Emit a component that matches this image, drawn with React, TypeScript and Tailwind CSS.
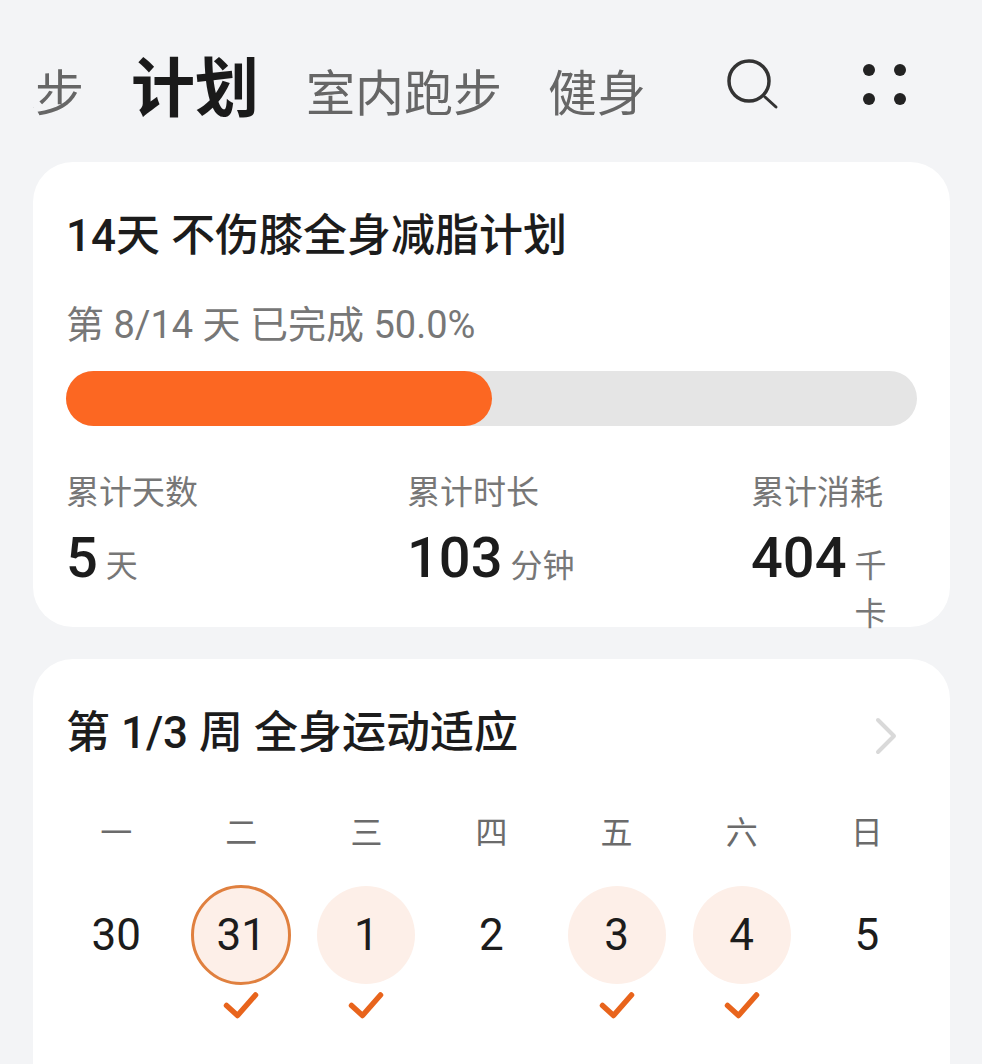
const cjk = "font-['Roboto','Noto_Sans_CJK_SC',sans-serif]";

const stats = [
  { label: '累计天数', value: '5', unit: '天' },
  { label: '累计时长', value: '103', unit: '分钟' },
  { label: '累计消耗', value: '404', unit: '千卡' },
];

const days = [
  { week: '一', date: '30', done: false, today: false },
  { week: '二', date: '31', done: true, today: true },
  { week: '三', date: '1', done: true, today: false },
  { week: '四', date: '2', done: false, today: false },
  { week: '五', date: '3', done: true, today: false },
  { week: '六', date: '4', done: true, today: false },
  { week: '日', date: '5', done: false, today: false },
];

function Check() {
  return (
    <svg width="36" height="28" viewBox="0 0 36 28" fill="none">
      <path d="M3.5 14.5l11 10L32.5 4" stroke="#e8641c" strokeWidth="5.5" strokeLinecap="round" strokeLinejoin="round" />
    </svg>
  );
}

function SearchGlyph() {
  return (
    <svg width="52" height="52" viewBox="0 0 52 52" fill="none">
      <circle cx="22" cy="23" r="20" stroke="#333333" strokeWidth="3.5" />
      <path d="M38 39l11 10" stroke="#333333" strokeWidth="3" strokeLinecap="round" />
    </svg>
  );
}

function DayCell({ week, date, done, today }: (typeof days)[number]) {
  return (
    <div className="flex flex-col items-center">
      <span className="text-[32px] leading-[40px] text-[#6b6b6b]">{week}</span>
      <div className="mt-[32px] flex h-[100px] w-[100px] items-center justify-center">
        <div
          className={`flex items-center justify-center rounded-full text-[44px] leading-none text-[#1c1c1c] ${
            done ? 'bg-[#fdefe8]' : ''
          } ${today ? 'h-[100px] w-[100px] border-[3px] border-[#e0803f]' : 'h-[98px] w-[98px]'}`}
        >
          {date}
        </div>
      </div>
      <div className="mt-[6px] h-[28px]">{done && <Check />}</div>
    </div>
  );
}

export default function App() {
  return (
    <div className={`h-[1064px] overflow-hidden bg-[#f3f4f6] ${cjk}`}>
      <header className="flex h-[162px] items-start pl-[33px]">
        <div className="mt-[55px] flex w-[620px] items-baseline overflow-hidden whitespace-nowrap text-[49px] leading-[70px] text-[#666666]">
          <span className="-ml-[47px] shrink-0">跑步</span>
          <span className="ml-[47px] shrink-0 text-[64px] font-bold text-[#1a1a1a]">计划</span>
          <span className="ml-[47px] shrink-0">室内跑步</span>
          <span className="ml-[46px] shrink-0">健身</span>
        </div>
        <div className="ml-[74px] mt-[58px]">
          <SearchGlyph />
        </div>
        <div className="ml-[84px] mt-[64px] grid grid-cols-2 gap-x-[19px] gap-y-[17px]">
          <span className="h-[12px] w-[12px] rounded-full bg-[#222222]" />
          <span className="h-[12px] w-[12px] rounded-full bg-[#222222]" />
          <span className="h-[12px] w-[12px] rounded-full bg-[#222222]" />
          <span className="h-[12px] w-[12px] rounded-full bg-[#222222]" />
        </div>
      </header>

      <section className="ml-[33px] mr-[32px] h-[465px] rounded-[40px] bg-white px-[33px] pt-[46px]">
        <h1 className="text-[44px] font-medium leading-[56px] text-[#1c1c1c]">14天 不伤膝全身减脂计划</h1>
        <p className="mt-[37px] text-[38px] leading-[48px] text-[#777777]">第 8/14 天 已完成 50.0%</p>
        <div className="mt-[22px] h-[55px] rounded-full bg-[#e5e5e5]">
          <div className="h-full w-1/2 rounded-full bg-[#fc6722]" />
        </div>
        <div className="mt-[45px] grid grid-cols-[341px_344px_1fr]">
          {stats.map((s) => (
            <div key={s.label}>
              <div className="text-[33px] leading-[44px] text-[#777777]">{s.label}</div>
              <div className="mt-[11px] flex items-baseline gap-[8px]">
                <span className="text-[56px] font-medium leading-[64px] text-[#1c1c1c]">{s.value}</span>
                <span className="text-[32px] text-[#777777]">{s.unit}</span>
              </div>
            </div>
          ))}
        </div>
      </section>

      <section className="ml-[33px] mr-[32px] mt-[32px] h-[500px] rounded-[40px] bg-white px-[33px] pt-[46px]">
        <div className="flex items-center justify-between">
          <h2 className="text-[44px] font-medium leading-[56px] text-[#1c1c1c]">第 1/3 周 全身运动适应</h2>
          <svg width="24" height="38" viewBox="0 0 24 38" fill="none" className="mr-[19px] mt-[6px]">
            <path d="M4 3l16 16L4 35" stroke="#d9d9d9" strokeWidth="4" strokeLinecap="round" strokeLinejoin="round" />
          </svg>
        </div>
        <div className="mt-[52px] grid grid-cols-7 gap-x-[24.7px]">
          {days.map((d) => (
            <DayCell key={d.week} {...d} />
          ))}
        </div>
      </section>
    </div>
  );
}
